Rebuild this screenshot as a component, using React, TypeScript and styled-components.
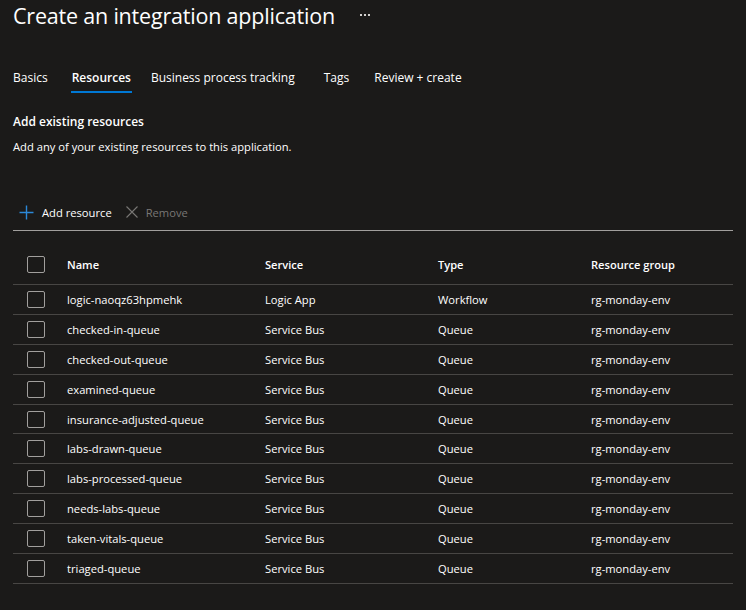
import styled, { createGlobalStyle } from 'styled-components';

const GlobalStyle = createGlobalStyle`
  html, body {
    margin: 0;
    padding: 0;
    background: #1b1a19;
  }
  body {
    font-family: "Open Sans", "Noto Sans", sans-serif;
    color: #ffffff;
  }
`;

const Page = styled.div`
  width: 746px;
  height: 610px;
  overflow: hidden;
  background: #1b1a19;
  padding: 0 13px;
  box-sizing: border-box;
`;

const TitleBar = styled.header`
  display: flex;
  align-items: center;
  height: 30px;
  gap: 25px;
`;

const Title = styled.h1`
  margin: 0;
  font-size: 21.5px;
  font-weight: 400;
  letter-spacing: -0.2px;
  color: #ffffff;
  white-space: nowrap;
`;

const More = styled.span`
  display: flex;
  gap: 2px;
  & i {
    width: 2px;
    height: 2px;
    background: #d2d0ce;
  }
`;

const Tabs = styled.nav`
  display: flex;
  margin-top: 32px;
  height: 30px;
`;

const Tab = styled.div<{ $active?: boolean; $gap: number }>`
  position: relative;
  margin-right: ${p => p.$gap}px;
  display: flex;
  align-items: center;
  font-size: 12px;
  font-weight: ${p => (p.$active ? 600 : 400)};
  color: #ffffff;
  white-space: nowrap;
  &::after {
    content: '';
    display: ${p => (p.$active ? 'block' : 'none')};
    position: absolute;
    left: -1px;
    right: -1px;
    bottom: -1px;
    height: 2px;
    background: #0078d4;
  }
`;

const SectionTitle = styled.h2`
  margin: 22px 0 0;
  font-size: 12px;
  line-height: 16px;
  font-weight: 600;
  color: #ffffff;
`;

const Description = styled.p`
  margin: 9px 0 0;
  font-size: 11.2px;
  line-height: 16px;
  color: #ffffff;
`;

const Toolbar = styled.div`
  display: flex;
  align-items: center;
  margin-top: 39px;
  height: 36px;
  padding-left: 6px;
  gap: 14px;
  border-bottom: 1px solid #a19f9d;
`;

const ToolButton = styled.button<{ $disabled?: boolean }>`
  display: flex;
  align-items: center;
  gap: 8px;
  padding: 0;
  border: 0;
  background: none;
  font-family: inherit;
  font-size: 11.2px;
  color: ${p => (p.$disabled ? '#797775' : '#ffffff')};
  cursor: ${p => (p.$disabled ? 'default' : 'pointer')};
`;

const Grid = styled.div`
  display: grid;
  grid-template-columns: 54px 198px 173px 153px 1fr;
`;

const HeaderRow = styled(Grid)`
  margin-top: 13px;
  height: 40px;
  align-items: center;
  border-bottom: 1px solid #484644;
  font-size: 11.1px;
  font-weight: 600;
`;

const Row = styled(Grid)`
  height: 28.9px;
  align-items: center;
  border-bottom: 1px solid #484644;
  font-size: 11.2px;
`;

const CheckCell = styled.div`
  padding-left: 14px;
  display: flex;
  align-items: center;
`;

const Checkbox = styled.span`
  width: 18px;
  height: 17px;
  box-sizing: border-box;
  border: 1px solid #a19f9d;
  border-radius: 2px;
`;

const Cell = styled.div`
  white-space: nowrap;
`;

const PlusIcon = () => (
  <svg width="15" height="15" viewBox="0 0 15 15">
    <path d="M7.5 0.5v14M0.5 7.5h14" stroke="#2b88d8" strokeWidth="1.4" />
  </svg>
);

const CloseIcon = () => (
  <svg width="12" height="12" viewBox="0 0 12 12">
    <path d="M0.5 0.5l11 11M11.5 0.5l-11 11" stroke="#797775" strokeWidth="1.1" />
  </svg>
);

const resources = [
  ['logic-naoqz63hpmehk', 'Logic App', 'Workflow'],
  ['checked-in-queue', 'Service Bus', 'Queue'],
  ['checked-out-queue', 'Service Bus', 'Queue'],
  ['examined-queue', 'Service Bus', 'Queue'],
  ['insurance-adjusted-queue', 'Service Bus', 'Queue'],
  ['labs-drawn-queue', 'Service Bus', 'Queue'],
  ['labs-processed-queue', 'Service Bus', 'Queue'],
  ['needs-labs-queue', 'Service Bus', 'Queue'],
  ['taken-vitals-queue', 'Service Bus', 'Queue'],
  ['triaged-queue', 'Service Bus', 'Queue'],
];

const tabs = [
  { label: 'Basics', gap: 24 },
  { label: 'Resources', gap: 20, active: true },
  { label: 'Business process tracking', gap: 29 },
  { label: 'Tags', gap: 25 },
  { label: 'Review + create', gap: 0 },
];

export default function App() {
  return (
    <Page>
      <GlobalStyle />
      <TitleBar>
        <Title>Create an integration application</Title>
        <More>
          <i />
          <i />
          <i />
        </More>
      </TitleBar>
      <Tabs>
        {tabs.map(t => (
          <Tab key={t.label} $active={t.active} $gap={t.gap}>
            {t.label}
          </Tab>
        ))}
      </Tabs>
      <SectionTitle>Add existing resources</SectionTitle>
      <Description>Add any of your existing resources to this application.</Description>
      <Toolbar>
        <ToolButton>
          <PlusIcon />
          Add resource
        </ToolButton>
        <ToolButton $disabled>
          <CloseIcon />
          Remove
        </ToolButton>
      </Toolbar>
      <HeaderRow>
        <CheckCell>
          <Checkbox />
        </CheckCell>
        <Cell>Name</Cell>
        <Cell>Service</Cell>
        <Cell>Type</Cell>
        <Cell>Resource group</Cell>
      </HeaderRow>
      {resources.map(([name, service, type]) => (
        <Row key={name}>
          <CheckCell>
            <Checkbox />
          </CheckCell>
          <Cell>{name}</Cell>
          <Cell>{service}</Cell>
          <Cell>{type}</Cell>
          <Cell>rg-monday-env</Cell>
        </Row>
      ))}
    </Page>
  );
}
